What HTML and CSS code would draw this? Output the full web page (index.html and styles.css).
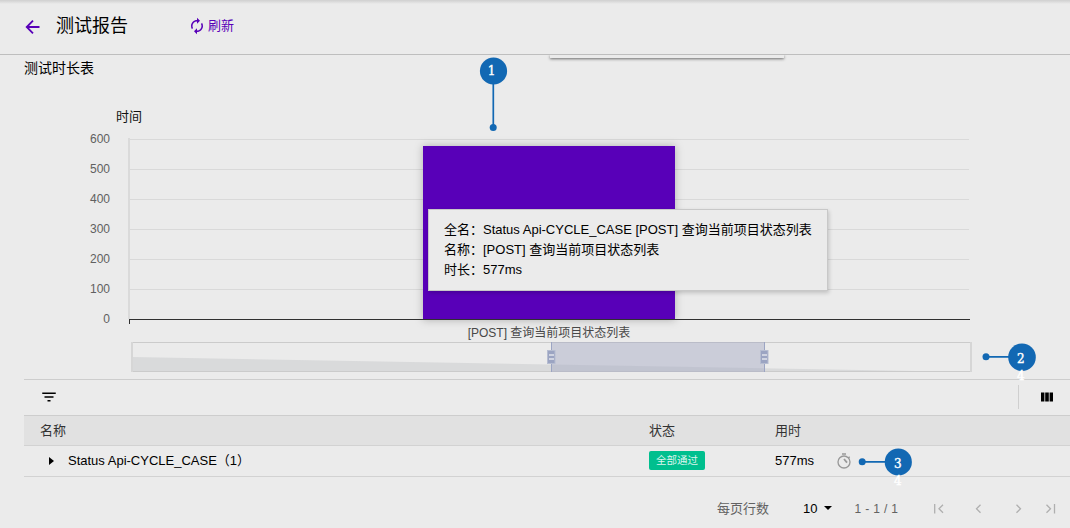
FILE: index.html
```html
<!DOCTYPE html>
<html lang="zh-CN">
<head>
<meta charset="utf-8">
<title>测试报告</title>
<link rel="stylesheet" href="styles.css">
</head>
<body>
<div class="page">
  <header class="header">
    <svg class="back" width="24" height="24" viewBox="0 0 24 24"><path d="M18.5 12H6M12 5.7L5.7 12l6.3 6.3" fill="none" stroke="currentColor" stroke-width="1.8"/></svg>
    <h1 class="title">测试报告</h1>
    <button class="refresh">
      <svg width="18" height="18" viewBox="0 0 24 24" fill="currentColor"><path d="M12 6v3l4-4-4-4v3c-4.42 0-8 3.58-8 8 0 1.57.46 3.03 1.24 4.26L6.7 14.8c-.45-.83-.7-1.79-.7-2.8 0-3.31 2.69-6 6-6zm6.76 1.74L17.3 9.2c.44.84.7 1.79.7 2.8 0 3.31-2.69 6-6 6v-3l-4 4 4 4v-3c4.42 0 8-3.58 8-8 0-1.57-.46-3.03-1.24-4.26z"/></svg>
      <span>刷新</span>
    </button>
  </header>

  <section class="report">
    <div class="card-edge"></div>
    <h2 class="subtitle">测试时长表</h2>
    <svg class="chart" width="1070" height="298" viewBox="0 81 1070 298">
      <text class="axis-name" x="129" y="121" text-anchor="middle">时间</text>
      <g class="ticks" text-anchor="end">
        <text x="110" y="143">600</text><text x="110" y="173">500</text><text x="110" y="203">400</text><text x="110" y="233">300</text><text x="110" y="263">200</text><text x="110" y="293">100</text><text x="110" y="323">0</text>
      </g>
      <path d="M129 139.500H969M129 169.500H969M129 199.500H969M129 229.500H969M129 259.500H969M129 289.500H969" stroke="#d9d9d9"/>
      <path d="M129 138V319" stroke="#dadada" stroke-width="2"/>
      <rect class="bar" x="423" y="146" width="252" height="174"/>
      <path d="M129 319.500H970M129.500 319V324" stroke="#303030"/>
      <text class="category" x="549" y="337" text-anchor="middle">[POST] 查询当前项目状态列表</text>
      <path d="M132 357L971 372H132z" fill="#d9dadb"/>
      <path d="M131 342.500H971M131 371.500H971" stroke="#cbcbcb"/>
      <path d="M132 342V372M971 342V372" stroke="#d6d6d6" stroke-width="2"/>
      <rect x="551" y="342" width="214" height="30" fill="#a7acc4" fill-opacity=".48"/>
      <g id="handle">
        <path d="M551.500 342V372" stroke="#9ca5c3"/>
        <rect x="547.500" y="350.500" width="7.500" height="13" fill="#9ba4c2" stroke="#b6bdd1"/>
        <path d="M549 355H554M549 359H554" stroke="#e2e4eb" stroke-width="1.300"/>
      </g>
      <use href="#handle" x="213"/>
    </svg>
    <div class="tooltip">全名：Status Api-CYCLE_CASE [POST] 查询当前项目状态列表<br>名称：[POST] 查询当前项目状态列表<br>时长：577ms</div>
  </section>

  <section class="table">
    <div class="toolbar">
      <svg width="18" height="18" viewBox="0 0 24 24"><path d="M10 18h4v-2h-4v2zM3 6v2h18V6H3zm3 7h12v-2H6v2z"/></svg>
      <div class="columns">
        <svg width="12" height="10" viewBox="0 0 12 10"><path d="M0 .5h3.400v9H0zM4.200 .5h3.600v9H4.200zM8.600 .5H12v9H8.600z"/></svg>
      </div>
    </div>
    <div class="row head">
      <span>名称</span><span>状态</span><span>用时</span>
    </div>
    <div class="row body">
      <span class="name"><i class="expand"></i>Status Api-CYCLE_CASE（1）</span>
      <span><b class="tag">全部通过</b></span>
      <span class="duration">577ms
        <svg width="16" height="16" viewBox="0 0 24 24"><g fill="none" stroke="#999" stroke-width="2"><circle cx="12" cy="13.500" r="9"/><path d="M9 1.500h6M18.500 7.500l2-2"/></g><path d="M12 9l4.500 5.500" fill="none" stroke="#999" stroke-width="2.600"/></svg>
      </span>
    </div>
    <div class="pager">
      <span class="per-page">每页行数</span>
      <span class="size">10</span><i class="caret"></i>
      <span class="range">1 - 1 / 1</span>
      <svg width="122" height="10" viewBox="0 0 122 10" fill="none" stroke="#afafaf" stroke-width="1.300"><path d="M.7 0V9.500M9 .7L5 4.700L9 8.700M46.500 .7L42.500 4.700L46.500 8.700M82.500 .7L86.500 4.700L82.500 8.700M112.500 .7L116.500 4.700L112.500 8.700M120.500 0V9.500"/></svg>
    </div>
  </section>

  <svg class="callouts" width="1070" height="528" viewBox="0 0 1070 528">
    <g fill="#1268b3" stroke="#1268b3" stroke-width="1.700">
      <path d="M493.300 84V127M986 356.800H1010M862 461.800H886"/>
      <g stroke="none">
        <circle cx="493.500" cy="71" r="13.600"/><circle cx="493.200" cy="127.500" r="3.500"/>
        <circle cx="1022" cy="357.200" r="13.800"/><circle cx="986" cy="356.800" r="3.500"/>
        <circle cx="898.300" cy="462" r="13.600"/><circle cx="862.200" cy="461.800" r="3.500"/>
      </g>
    </g>
    <g class="numbers" text-anchor="middle">
      <text x="491.600" y="75">1</text><text x="1020.700" y="363">2</text><text x="897.700" y="468">3</text>
      <text x="1020.700" y="380">4</text><text x="897.700" y="485">4</text>
    </g>
  </svg>
</div>
</body>
</html>
```
FILE: styles.css
```css
* { box-sizing: border-box; }
body {
  margin: 0;
  background: #ebebeb;
  color: #111;
  font: 13px/20px "Liberation Sans", "Noto Sans CJK SC", sans-serif;
}
.page {
  position: relative;
  width: 1070px;
  height: 528px;
  overflow: hidden;
}
.header {
  display: flex;
  align-items: center;
  height: 55px;
  padding: 0 21px 2px;
  border-bottom: 1px solid #bebebe;
  background: linear-gradient(#d0d0d0, #d6d6d6 1px, #ebebeb 4px);
}
.back { color: #5800b8; margin-top: 2px; }
.title { margin: 0 0 0 11px; color: #000; font-size: 18px; font-weight: 400; line-height: 26px; }
.refresh {
  display: flex;
  align-items: center;
  gap: 2px;
  margin-left: 60px;
  padding: 0;
  border: 0;
  background: none;
  color: #5800b8;
  font: inherit;
}
.report { position: relative; height: 324px; }
.card-edge {
  position: absolute;
  left: 550px;
  top: 0;
  width: 234px;
  height: 3px;
  box-shadow: 0 1px 3px #666;
  background: #ebebeb;
  clip-path: inset(0 -4px -6px);
}
.subtitle {
  margin: 0;
  height: 26px;
  padding-left: 24px;
  color: #000;
  font-size: 14px;
  font-weight: 400;
  line-height: 26px;
}
.chart { display: block; }
.axis-name { font-size: 13px; fill: #111; }
.ticks { font-size: 12px; fill: #606060; }
.category { font-size: 12px; fill: #484848; }
.bar { fill: #5800b8; filter: drop-shadow(0 0 4px rgba(0, 0, 0, .25)); }
.tooltip {
  position: absolute;
  left: 428px;
  top: 154px;
  width: 400px;
  height: 82px;
  padding: 10px 15px;
  border: 1px solid #c8c8c8;
  background: #ebebeb;
  box-shadow: 1px 2px 4px rgba(0, 0, 0, .18);
  color: #000;
  white-space: nowrap;
}
.table { margin-left: 24px; }
.toolbar {
  display: flex;
  align-items: center;
  justify-content: space-between;
  height: 36px;
  padding: 0 17px 2px 16px;
  border-top: 1px solid #cdcdcd;
}
.columns {
  display: flex;
  align-items: center;
  height: 24px;
  padding-left: 22px;
  border-left: 1px solid #cfcfcf;
}
.row {
  display: grid;
  grid-template-columns: 609px 126px 1fr;
  align-items: center;
  height: 31px;
  padding-left: 16px;
  border-bottom: 1px solid #d2d2d2;
}
.head { border-top: 1px solid #cdcdcd; background: #e1e1e1; color: #333; }
.body { color: #000; }
.name, .duration { display: flex; align-items: center; }
.expand {
  margin: 0 14px 0 9px;
  border: 4px solid transparent;
  border-left: 5px solid #000;
  border-right: 0;
}
.tag {
  display: block;
  width: 56px;
  height: 19px;
  margin-bottom: 2px;
  border-radius: 2px;
  background: #00bf8e;
  color: #dcf5ed;
  font-size: 10.5px;
  font-weight: 400;
  line-height: 19px;
  text-align: center;
}
.duration { gap: 22px; }
.pager { display: flex; align-items: center; height: 51px; padding: 13px 0 0 693px; color: #626262; }
.per-page { margin-right: 1px; }
.size { margin-left: 33px; color: #000; }
.caret {
  margin: -2px 0 0 7px;
  border: 4px solid transparent;
  border-top-color: #000;
  border-bottom: 0;
}
.range { width: 45px; margin: 0 35px 0 22px; font-size: 12px; letter-spacing: .35px; white-space: nowrap; }
.callouts { position: absolute; left: 0; top: 0; pointer-events: none; }
.numbers { fill: #fff; stroke: #fff; stroke-width: .4px; font: 12px "DejaVu Serif", serif; }
```
